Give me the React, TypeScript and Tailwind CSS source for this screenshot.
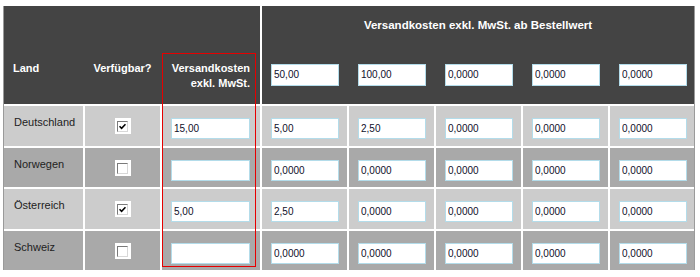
import React from "react";

interface ShippingRow {
  land: string;
  available: boolean;
  cost: string;
  tiers: string[];
  dark: boolean;
}

const thresholds = ["50,00", "100,00", "0,0000", "0,0000", "0,0000"];

const rows: ShippingRow[] = [
  { land: "Deutschland", available: true, cost: "15,00", tiers: ["5,00", "2,50", "0,0000", "0,0000", "0,0000"], dark: false },
  { land: "Norwegen", available: false, cost: "", tiers: ["0,0000", "0,0000", "0,0000", "0,0000", "0,0000"], dark: true },
  { land: "Österreich", available: true, cost: "5,00", tiers: ["2,50", "0,0000", "0,0000", "0,0000", "0,0000"], dark: false },
  { land: "Schweiz", available: false, cost: "", tiers: ["0,0000", "0,0000", "0,0000", "0,0000", "0,0000"], dark: true },
];

const Field: React.FC<{ value: string; width: string; height: string }> = ({ value, width, height }) => (
  <input
    readOnly
    value={value}
    className={`${width} ${height} bg-white border border-[#b3dcea] pl-[2px] text-[10px] text-[#10102a] outline-none font-['Liberation_Sans',Arial,sans-serif]`}
  />
);

const Checkbox: React.FC<{ checked: boolean }> = ({ checked }) => (
  <div className="w-[16px] h-[16px] bg-white flex items-center justify-center">
    <div className="w-[11px] h-[11px] border border-t-[#7a7a7a] border-l-[#7a7a7a] border-b-[#d8d8d8] border-r-[#d8d8d8] bg-white flex items-center justify-center">
      {checked && (
        <svg width="7" height="7" viewBox="0 0 7 7">
          <path d="M0.5 3.2 L2.6 5.3 L6.5 1.2" fill="none" stroke="#000" strokeWidth="1.6" />
        </svg>
      )}
    </div>
  </div>
);

export default function App() {
  return (
    <div className="relative w-[700px] h-[277px] bg-white pl-[3px] pt-[6px] font-['Liberation_Sans',Arial,sans-serif] overflow-hidden">
      <div className="grid grid-cols-[79px_75px_98px_85px_85px_85px_85px_84px] gap-x-[2px] gap-y-[2px] w-fit border-l border-r border-[#9a9a9a]">
        {/* Left header block */}
        <div className="col-span-3 h-[98px] bg-[#444444] flex gap-[2px] pt-[55px] text-[11px] leading-[15px] font-bold text-white">
          <div className="w-[79px] pl-[9px]">Land</div>
          <div className="w-[75px] text-center">Verfügbar?</div>
          <div className="w-[98px] pr-[10px] text-right">
            Versandkosten
            <br />
            exkl. MwSt.
          </div>
        </div>

        {/* Right header block */}
        <div className="col-span-5 h-[98px] bg-[#444444] flex flex-col">
          <div className="pt-[12px] text-center text-[11.5px] leading-[15px] font-bold text-white">
            Versandkosten exkl. MwSt. ab Bestellwert
          </div>
          <div className="mt-[28px] grid grid-cols-[85px_85px_85px_85px_84px] gap-x-[2px]">
            {thresholds.map((t, i) => (
              <div key={i} className="pl-[9px]">
                <Field value={t} width="w-[68px]" height="h-[22px]" />
              </div>
            ))}
          </div>
        </div>

        {/* Country rows */}
        {rows.map((row) => {
          const bg = row.dark ? "bg-[#a9a9a9]" : "bg-[#cccccc]";
          const h = row.dark ? "h-[39px]" : "h-[40px]";
          return (
            <React.Fragment key={row.land}>
              <div className={`${bg} ${h} pl-[10px] pt-[9px] text-[11px] leading-[15px] text-[#222222]`}>{row.land}</div>
              <div className={`${bg} ${h} pt-[12px] flex justify-center`}>
                <Checkbox checked={row.available} />
              </div>
              <div className={`${bg} ${h} pl-[9px] pt-[9px]`}>
                <Field value={row.cost} width="w-[79px]" height="h-[21px]" />
              </div>
              {row.tiers.map((v, i) => (
                <div key={i} className={`${bg} ${h} pl-[9px] pt-[9px]`}>
                  <Field value={v} width="w-[68px]" height="h-[21px]" />
                </div>
              ))}
            </React.Fragment>
          );
        })}
      </div>

      {/* Red highlight around the base shipping column */}
      <div className="absolute left-[162px] top-[53px] w-[94px] h-[214px] border border-[#e60000] pointer-events-none" />
    </div>
  );
}
